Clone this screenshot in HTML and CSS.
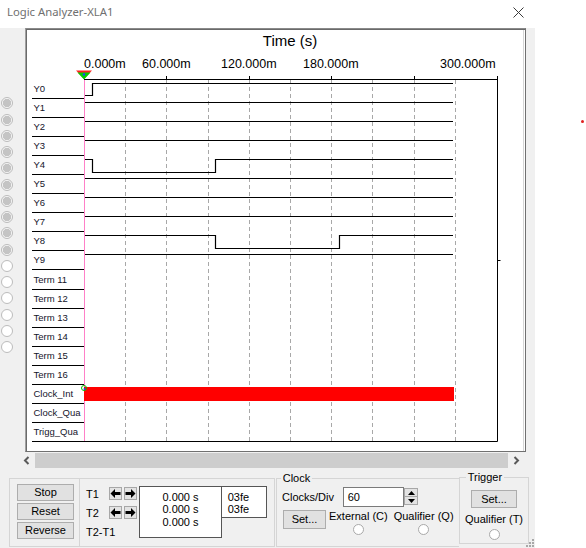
FILE: index.html
```html
<!DOCTYPE html>
<html>
<head>
<meta charset="utf-8">
<title>Logic Analyzer-XLA1</title>
<link rel="stylesheet" href="styles.css">
</head>
<body>
<div class="titlebar">
  <span class="title">Logic Analyzer-XLA1</span>
  <svg class="close" width="11" height="11" viewBox="0 0 11 11"><path d="M.5.5l10 10M10.5.5l-10 10" stroke="#3a3a3a" stroke-width="1" fill="none"/></svg>
</div>
<div class="window">
  <div class="main">
    <div class="radios">
      <span class="radio on"></span><span class="radio on"></span><span class="radio on"></span><span class="radio on"></span><span class="radio on"></span>
      <span class="radio on"></span><span class="radio on"></span><span class="radio on"></span><span class="radio on"></span><span class="radio on"></span>
      <span class="radio"></span><span class="radio"></span><span class="radio"></span><span class="radio"></span><span class="radio"></span><span class="radio"></span>
    </div>
    <div class="frame">
      <svg class="plot" width="499" height="422" viewBox="26 29 499 422">
        <path d="M26 29.5H525M26.5 29V451" stroke="#6a6a6a" fill="none"/>
        <path d="M523.5 30V451" stroke="#d6d6d6" fill="none"/>
        <text class="axt" x="290" y="45.5" text-anchor="middle">Time (s)</text>
        <g class="tk">
          <text x="84" y="67.5">0.000m</text>
          <text x="142" y="67.5">60.000m</text>
          <text x="221" y="67.5">120.000m</text>
          <text x="303" y="67.5">180.000m</text>
          <text x="440" y="67.5">300.000m</text>
        </g>
        <path d="M125.5 80V441M166.5 80V441M208.5 80V441M249.5 80V441M290.5 80V441M331.5 80V441M372.5 80V441M414.5 80V441M455.5 80V441" stroke="#a8a8a8" stroke-dasharray="4 3" fill="none"/>
        <path d="M84.5 79V441.5" stroke="#ff80c8" fill="none"/>
        <path d="M84 79.5H497.5M497.5 76V441.5M166.5 76V79M249.5 76V79M331.5 76V79M414.5 76V79M497.5 260.5H500.5" stroke="#000" fill="none"/>
        <path d="M32 98.5H84M32 117.5H84M32 136.5H84M32 155.5H84M32 174.5H84M32 193.5H84M32 212.5H84M32 231.5H84M32 250.5H84M32 269.5H84M32 289.5H84M32 308.5H84M32 327.5H84M32 346.5H84M32 365.5H84M32 384.5H84M32 403.5H84M32 422.5H84M32 441.5H497.5" stroke="#000" fill="none"/>
        <path d="M85 95.5H92.5V83.5H453M85 102.5H453M85 121.5H453M85 140.5H453M85 159.5H92.5V172.5H215.5V159.5H453M85 178.5H453M85 197.5H453M85 216.5H453M85 235.5H215.5V248.5H339.5V235.5H453M85 254.5H453" stroke="#000" stroke-width="1.2" fill="none"/>
        <rect x="84" y="387" width="370" height="14" fill="#ff0000"/>
        <circle cx="84" cy="388" r="2.5" fill="none" stroke="#00c000" stroke-width="1"/>
        <circle cx="84.5" cy="389" r="1" fill="#2040ff"/>
        <polygon points="76,70.5 92,70.5 84,79" fill="#ff2020"/>
        <polygon points="77.5,72.5 90.5,72.5 84,79.5" fill="#00d000"/>
        <circle cx="84" cy="74.5" r="1.2" fill="#2040ff"/>
        <g class="lb">
          <text x="33.5" y="92">Y0</text>
          <text x="33.5" y="111">Y1</text>
          <text x="33.5" y="130">Y2</text>
          <text x="33.5" y="149">Y3</text>
          <text x="33.5" y="168">Y4</text>
          <text x="33.5" y="187">Y5</text>
          <text x="33.5" y="206">Y6</text>
          <text x="33.5" y="225">Y7</text>
          <text x="33.5" y="244">Y8</text>
          <text x="33.5" y="263">Y9</text>
          <text x="33.5" y="282.7">Term 11</text>
          <text x="33.5" y="301.7">Term 12</text>
          <text x="33.5" y="320.7">Term 13</text>
          <text x="33.5" y="339.7">Term 14</text>
          <text x="33.5" y="358.7">Term 15</text>
          <text x="33.5" y="377.7">Term 16</text>
          <text x="33.5" y="396.7">Clock_Int</text>
          <text x="33.5" y="415.7">Clock_Qua</text>
          <text x="33.5" y="434.7">Trigg_Qua</text>
        </g>
      </svg>
    </div>
  </div>
  <div class="hscroll">
    <span class="sbtn"><svg width="7" height="9" viewBox="0 0 7 9"><path d="M5.5 1L2 4.5L5.5 8" stroke="#5a5a5a" stroke-width="2" fill="none"/></svg></span>
    <span class="track"></span>
    <span class="sbtn"><svg width="7" height="9" viewBox="0 0 7 9"><path d="M1.5 1L5 4.5L1.5 8" stroke="#5a5a5a" stroke-width="2" fill="none"/></svg></span>
  </div>
  <div class="controls">
    <div class="grpA">
      <div class="btncol">
        <span class="btn">Stop</span>
        <span class="btn">Reset</span>
        <span class="btn">Reverse</span>
      </div>
      <div class="tcol">
        <div class="tleft">
          <div class="trow"><span class="tl">T1</span>
            <span class="abtn"><svg width="11" height="11" viewBox="0 0 11 11"><path d="M.5 5.5L5 1V4H10.5V7H5V10Z" fill="#000"/></svg></span>
            <span class="abtn"><svg width="11" height="11" viewBox="0 0 11 11"><path d="M10.5 5.5L6 1V4H.5V7H6V10Z" fill="#000"/></svg></span>
          </div>
          <div class="trow"><span class="tl">T2</span>
            <span class="abtn"><svg width="11" height="11" viewBox="0 0 11 11"><path d="M.5 5.5L5 1V4H10.5V7H5V10Z" fill="#000"/></svg></span>
            <span class="abtn"><svg width="11" height="11" viewBox="0 0 11 11"><path d="M10.5 5.5L6 1V4H.5V7H6V10Z" fill="#000"/></svg></span>
          </div>
          <div class="trow"><span class="tl">T2-T1</span></div>
        </div>
        <div class="vals">
          <div>0.000 s</div>
          <div>0.000 s</div>
          <div>0.000 s</div>
        </div>
        <div class="hex">
          <div>03fe</div>
          <div>03fe</div>
        </div>
      </div>
    </div>
    <fieldset class="clock">
      <legend>Clock</legend>
      <div class="crow1">
        <span class="clab">Clocks/Div</span>
        <span class="num">60</span>
        <span class="spin">
          <span class="sp"><svg width="7" height="4" viewBox="0 0 7 4"><path d="M0 4L3.5 0L7 4Z" fill="#000"/></svg></span>
          <span class="sp"><svg width="7" height="4" viewBox="0 0 7 4"><path d="M0 0L3.5 4L7 0Z" fill="#000"/></svg></span>
        </span>
      </div>
      <div class="crow2">
        <span class="btn setbtn">Set...</span>
        <span class="opt"><span class="otxt">External (C)</span><span class="oradio"></span></span>
        <span class="opt optq"><span class="otxt">Qualifier (Q)</span><span class="oradio"></span></span>
      </div>
    </fieldset>
    <fieldset class="trig">
      <legend>Trigger</legend>
      <div class="tbody">
        <span class="btn tset">Set...</span>
        <span class="otxt ttxt">Qualifier (T)</span>
        <span class="oradio tradio"></span>
      </div>
    </fieldset>
    <svg class="grip" width="10" height="10" viewBox="0 0 10 10">
      <rect x="7" y="1" width="2" height="2" fill="#a8a8a8"/>
      <rect x="4" y="4" width="2" height="2" fill="#a8a8a8"/>
      <rect x="7" y="4" width="2" height="2" fill="#a8a8a8"/>
      <rect x="1" y="7" width="2" height="2" fill="#a8a8a8"/>
      <rect x="4" y="7" width="2" height="2" fill="#a8a8a8"/>
      <rect x="7" y="7" width="2" height="2" fill="#a8a8a8"/>
    </svg>
  </div>
</div>
<span class="reddot"></span>
</body>
</html>
```

FILE: styles.css
```css
* { box-sizing: border-box; }
html, body { margin: 0; padding: 0; }
body {
  width: 586px;
  height: 548px;
  background: #fff;
  font-family: "Liberation Sans", Arial, sans-serif;
  font-size: 11px;
  color: #000;
  position: relative;
  overflow: hidden;
}
.titlebar {
  width: 535px;
  height: 28px;
  display: flex;
  align-items: center;
  padding-left: 7px;
}
.title {
  flex: 1;
  font-family: "Noto Sans", "Open Sans", sans-serif;
  font-size: 11.3px;
  line-height: 14px;
  color: #707070;
  margin-top: -4px;
}
.close { margin-right: 11px; margin-top: -4px; }

.window {
  width: 535px;
  height: 520px;
  background: #f0f0f0;
  position: relative;
}
.main { display: flex; height: 424px; }
.radios {
  width: 25px;
  display: flex;
  flex-direction: column;
  gap: 4.27px;
  padding-top: 69.3px;
  padding-left: 0.5px;
}
.radio {
  width: 12px;
  height: 12px;
  border-radius: 50%;
  border: 1px solid #bcbcbc;
  background: #fff;
}
.radio.on { background: radial-gradient(circle, #c4c4c4 0 3.8px, #f6f6f6 4.5px); }

.frame {
  width: 501px;
  height: 424px;
  background: #fff;
  border: 1px solid #707070;
  border-left-color: #a0a0a0;
  border-top-color: #8a8a8a;
}
.plot { display: block; }
.plot text { font-family: "Liberation Sans", Arial, sans-serif; fill: #000; }
.plot .axt { font-size: 15px; }
.plot .tk text { font-size: 12.5px; }
.plot .lb text { font-size: 9.5px; fill: #14142a; }

.hscroll {
  display: flex;
  margin: 1px 0 0 18px;
  width: 507px;
  height: 15px;
}
.sbtn {
  width: 17px;
  display: flex;
  align-items: center;
  justify-content: center;
}
.track { flex: 1; background: #cdcdcd; }

.controls {
  display: flex;
  align-items: flex-start;
  padding-left: 9px;
  height: 80px;
}
.grpA {
  margin-top: 10px;
  width: 266px;
  height: 69px;
  border: 1px solid #d5d5d5;
  display: flex;
}
.btncol {
  width: 70px;
  border-right: 1px solid #d5d5d5;
  padding: 5px 0 0 7px;
  display: flex;
  flex-direction: column;
  gap: 2px;
}
.btn {
  display: flex;
  align-items: center;
  justify-content: center;
  width: 57px;
  height: 17px;
  background: #e1e1e1;
  border: 1px solid #adadad;
  line-height: 13px;
}
.tcol { display: flex; padding: 5px 0 0 6px; }
.tleft { width: 53px; }
.trow { height: 19px; display: flex; align-items: center; gap: 2px; }
.tl { width: 21px; white-space: nowrap; }
.abtn {
  width: 13px;
  height: 13px;
  border: 1px solid #a7a7a7;
  background: #e3e3e3;
  display: flex;
  align-items: center;
  justify-content: center;
}
.vals {
  margin-top: 2px;
  width: 83px;
  height: 52px;
  border: 1px solid #555;
  background: #fff;
  text-align: center;
  padding-top: 3.7px;
  line-height: 12.5px;
}
.hex {
  margin-top: 2px;
  margin-left: -1px;
  width: 46px;
  height: 32px;
  border: 1px solid #555;
  background: #fff;
  padding: 3.5px 0 0 5.7px;
  line-height: 12.5px;
}

fieldset {
  margin: 0;
  padding: 0;
  min-width: 0;
  border: 1px solid #d5d5d5;
}
legend {
  padding: 0 2px;
  line-height: 13px;
  font-size: 11px;
}
.clock {
  margin: 3.5px 0 0 1px;
  width: 183px;
  height: 75px;
  border-right: none;
}
.clock legend { margin-left: 3.7px; }
.crow1 {
  display: flex;
  align-items: center;
  height: 20px;
  margin-top: 2.2px;
  padding-left: 5px;
}
.clab { width: 60.7px; }
.num {
  width: 61px;
  height: 20px;
  border: 1px solid #7a7a7a;
  background: #fff;
  padding-left: 4px;
  line-height: 18px;
}
.spin {
  width: 14px;
  height: 17px;
  margin-left: 0.5px;
  display: flex;
  flex-direction: column;
}
.sp {
  flex: 1;
  border: 1px solid #a7a7a7;
  background: #e3e3e3;
  display: flex;
  align-items: center;
  justify-content: center;
}
.sp + .sp { border-top: none; }
.crow2 {
  display: flex;
  align-items: flex-start;
  margin-top: 3.3px;
  padding-left: 6px;
}
.setbtn { width: 43px; height: 19px; }
.opt {
  display: flex;
  flex-direction: column;
  align-items: center;
  margin-left: 3px;
}
.optq { margin-left: 6px; }
.otxt { line-height: 13px; margin-top: 0.5px; white-space: nowrap; }
.oradio {
  width: 11px;
  height: 11px;
  border-radius: 50%;
  border: 1px solid #a9a9a9;
  background: #fff;
  margin-top: 1px;
}
.trig {
  margin-top: 2.5px;
  width: 70px;
  height: 73px;
}
.trig legend { margin-left: 5.7px; }
.tbody {
  display: flex;
  flex-direction: column;
  align-items: center;
}
.tset { width: 46px; height: 18px; margin-top: 6.5px; }
.ttxt { margin-top: 4.5px; }
.tradio { margin-top: 3.3px; }

.grip { position: absolute; right: 0; bottom: 0; }
.reddot {
  position: absolute;
  left: 581px;
  top: 120px;
  width: 3px;
  height: 3px;
  border-radius: 50%;
  background: #e02020;
}
```
